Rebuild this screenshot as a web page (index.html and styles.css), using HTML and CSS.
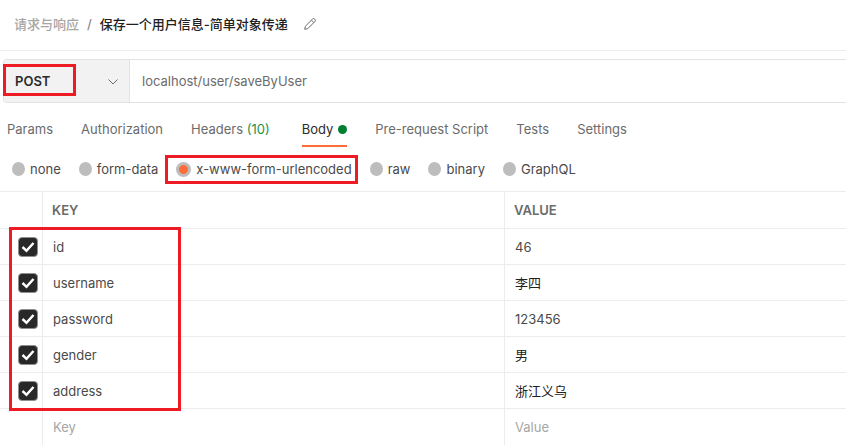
FILE: index.html
```html
<!DOCTYPE html>
<html lang="zh-CN">
<head>
<meta charset="utf-8">
<meta name="viewport" content="width=device-width, initial-scale=1">
<title>保存一个用户信息-简单对象传递</title>
<link rel="stylesheet" href="styles.css">
</head>
<body>
<header class="title-bar">
  <a class="crumb" href="#">请求与响应</a>
  <span class="slash">/</span>
  <h1 class="title">保存一个用户信息-简单对象传递</h1>
  <button class="edit" type="button" aria-label="Edit name">
    <svg width="14" height="14" viewBox="0 0 14 14" fill="none" stroke="#6b6b6b" stroke-linejoin="round"><path d="M1.7 12.3 2.4 9.2 9.6 2Q10.6 1 11.8 2.2T12 4.4L4.8 11.6ZM8.4 3.2 10.8 5.6"/></svg>
  </button>
</header>
<main>
  <form class="request">
    <div class="method mark">
      <select aria-label="Method"><option>POST</option></select>
      <svg class="chevron" width="12" height="8" viewBox="0 0 12 8" fill="none" stroke="#6b6b6b"><path d="M1.5 1.5 6 6l4.500-4.500"/></svg>
    </div>
    <input class="url" type="text" aria-label="Request URL" value="localhost/user/saveByUser">
  </form>
  <nav class="tabs">
    <a href="#">Params</a>
    <a href="#">Authorization</a>
    <a class="counted" href="#">Headers <span class="count">(10)</span></a>
    <a class="active" href="#">Body<span class="dot"></span></a>
    <a href="#">Pre-request Script</a>
    <a href="#">Tests</a>
    <a href="#">Settings</a>
  </nav>
  <div class="types" role="radiogroup" aria-label="Body type">
    <label><input type="radio" name="type">none</label>
    <label><input type="radio" name="type">form-data</label>
    <label class="mark"><input type="radio" name="type" checked>x-www-form-urlencoded</label>
    <label><input type="radio" name="type">raw</label>
    <label><input type="radio" name="type">binary</label>
    <label><input type="radio" name="type">GraphQL</label>
  </div>
  <div class="params mark">
    <table>
      <colgroup><col class="col-check"><col><col class="col-value"></colgroup>
      <thead><tr><td></td><th scope="col">KEY</th><th scope="col">VALUE</th></tr></thead>
      <tbody>
        <tr><td><input type="checkbox" aria-label="id" checked></td><td>id</td><td>46</td></tr>
        <tr><td><input type="checkbox" aria-label="username" checked></td><td>username</td><td class="han">李四</td></tr>
        <tr><td><input type="checkbox" aria-label="password" checked></td><td>password</td><td>123456</td></tr>
        <tr><td><input type="checkbox" aria-label="gender" checked></td><td>gender</td><td class="han">男</td></tr>
        <tr><td><input type="checkbox" aria-label="address" checked></td><td>address</td><td class="han">浙江义乌</td></tr>
        <tr><td></td><td><input class="entry" type="text" placeholder="Key" aria-label="Key"></td><td><input class="entry" type="text" placeholder="Value" aria-label="Value"></td></tr>
      </tbody>
    </table>
  </div>
</main>
</body>
</html>
```
FILE: styles.css
```css
*, *::after { box-sizing: border-box; }

body {
  margin: 0;
  background: #fff;
  color: #4a4a4a;
  font: 13px/20px Inter, "Noto Sans CJK SC", sans-serif;
  overflow: hidden;
}

a { color: inherit; text-decoration: none; }

input, select, button { font: inherit; color: inherit; }

/* Header */
.title-bar {
  display: flex;
  align-items: center;
  height: 51px;
  padding: 0 14px 3px;
  border-bottom: 1px solid #ececec;
}

.crumb { color: #a6a6a6; font-weight: 500; }
.slash { margin: 0 8px; color: #8a8a8a; font-weight: 500; }

.title {
  margin: 0;
  color: #212121;
  font-size: 13px;
  font-weight: 500;
}

.edit {
  display: flex;
  margin-left: 15px;
  padding: 0;
  border: 0;
  background: none;
}

/* Red annotation frames */
.mark { position: relative; }

.mark::after {
  content: "";
  position: absolute;
  border: 3px solid #ed1c24;
  pointer-events: none;
}

/* Method and address */
.request {
  display: flex;
  height: 44px;
  margin: 8px 0 0 3px;
  border: 1px solid #e3e3e3;
  border-right: 0;
  border-radius: 4px 0 0 4px;
}

.method {
  flex: 0 0 126px;
  border-right: 1px solid #e3e3e3;
  border-radius: 3px 0 0 3px;
  background: #f2f2f2;
}

.method select {
  width: 100%;
  height: 100%;
  padding: 0 11px;
  border: 0;
  appearance: none;
  background: none;
  color: #2b2b2b;
  font-weight: 600;
}

.method::after { top: 4px; left: -1px; width: 73px; height: 32px; }

.chevron {
  position: absolute;
  top: 18px;
  right: 10px;
  pointer-events: none;
}

.url {
  flex: 1;
  min-width: 0;
  padding: 0 12px;
  border: 0;
  background: none;
  color: #6b6b6b;
}

/* Tabs */
.tabs {
  display: flex;
  gap: 28px;
  padding: 16px 7px 0;
  color: #6b6b6b;
}

.tabs a {
  height: 28px;
  border-bottom: 2px solid transparent;
  white-space: nowrap;
}

.tabs .counted { padding-right: 4px; }
.count { color: #1f9246; }

.tabs .active {
  display: flex;
  gap: 5px;
  border-color: #ff6c37;
  color: #2b2b2b;
}

.dot {
  width: 9px;
  height: 9px;
  margin-top: 6px;
  border-radius: 50%;
  background: #007f31;
}

/* Body types */
.types {
  display: flex;
  gap: 18px;
  padding: 12px 12px;
}

.types label {
  display: flex;
  align-items: center;
  gap: 5px;
  white-space: nowrap;
}

.types input {
  width: 13px;
  height: 14px;
  margin: 0;
  border-radius: 50%;
  appearance: none;
  background: #bdbdbd;
}

.types input:checked {
  width: 15px;
  height: 15px;
  background: radial-gradient(circle, #ff6c37 4px, #bdbdbd 5px);
}

.types .mark::after { inset: -4px -6px -5px -11px; }

/* Parameters */
.params { border-top: 1px solid #ececec; }
.params::after { top: 35px; left: 9px; width: 172px; height: 184px; }

table {
  width: 100%;
  border-collapse: separate;
  border-spacing: 0;
  table-layout: fixed;
}

.col-check { width: 42px; }
.col-value { width: 342px; }

th, td {
  height: 36px;
  padding: 0 10px;
  border-bottom: 1px solid #ececec;
  border-left: 1px solid #ececec;
  text-align: left;
}

thead td, th { height: 37px; }
tbody tr:last-child td { border-bottom: 0; }
th { padding-left: 9px; color: #6b6b6b; font-weight: 600; }
td:first-child { padding: 0 0 0 18px; border-left: 0; }
.han { color: #212121; }

td input[type="checkbox"] {
  display: block;
  width: 20px;
  height: 20px;
  margin: 0;
  border: 1px solid #8f8f8f;
  border-radius: 4px;
  appearance: none;
  background: #282828 url('data:image/svg+xml,<svg xmlns="http://www.w3.org/2000/svg" viewBox="0 0 18 18" fill="none" stroke="white" stroke-width="2.500"><path d="M3.500 9 7.500 12.800 14.500 5"/></svg>') center / 18px;
}

.entry {
  display: block;
  width: 100%;
  height: 34px;
  padding: 0;
  border: 0;
  background: none;
}

.entry::placeholder { color: #a6a6a6; }
```
